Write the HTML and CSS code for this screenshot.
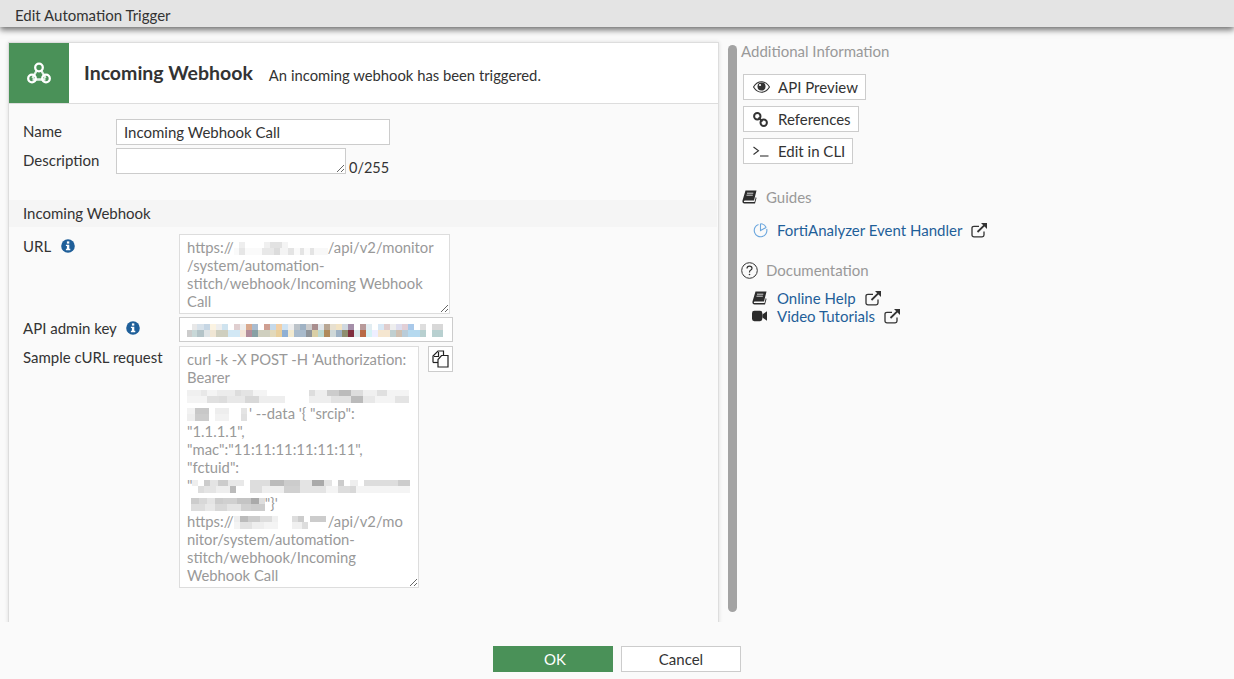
FILE: index.html
```html
<!DOCTYPE html>
<html lang="en">
<head>
  <meta charset="UTF-8" />
  <title>Edit Automation Trigger</title>
  <link rel="stylesheet" href="styles.css">
</head>
<body>

  <div class="title-bar">Edit Automation Trigger</div>

  <div class="main">
    <!-- Left: trigger form -->
    <div class="panel">
      <div class="panel-head">
        <div class="head-icon">
          <svg width="24" height="22" viewBox="0 0 24 22" fill="none" stroke="#fff" stroke-width="2.300">
            <path d="M9.6 8.800 L5.500 16 M14.400 8.800 L18.500 16 M5.500 17.500 H18.500" stroke="#e4f2e8" />
            <circle cx="12" cy="5.500" r="3.800" />
            <circle cx="5" cy="16.500" r="3.800" />
            <circle cx="19" cy="16.500" r="3.800" />
          </svg>
        </div>
        <span class="head-title">Incoming Webhook</span>
        <span class="head-text">An incoming webhook has been triggered.</span>
      </div>

      <div class="top-fields">
        <div class="row-name">
          <label class="lbl-short">Name</label>
          <input class="field name-input" type="text" value="Incoming Webhook Call" />
        </div>
        <div class="row-desc">
          <label class="lbl-short">Description</label>
          <textarea class="field desc-input"></textarea>
          <span class="counter">0/255</span>
        </div>
      </div>

      <div class="section-title">Incoming Webhook</div>

      <div class="hook-fields">
        <div class="row-url">
          <label class="lbl-long">URL
            <svg class="info url-info" width="14" height="14" viewBox="0 0 14 14"><circle cx="7" cy="7" r="6.800" fill="#1f5f99" /><rect x="5.900" y="2.400" width="2.400" height="2.200" fill="#fff" /><path d="M4.900 5.700h3.400v4.100h1v1.400H4.900V9.800h1V7.100h-1z" fill="#fff" /></svg>
          </label>
          <div class="area url-area">https://<span class="blur blur-url"></span>/api/v2/monitor<br>/system/automation-<br>stitch/webhook/Incoming Webhook<br>Call</div>
        </div>
        <div class="row-key">
          <label class="lbl-long">API admin key
            <svg class="info key-info" width="14" height="14" viewBox="0 0 14 14"><circle cx="7" cy="7" r="6.800" fill="#1f5f99" /><rect x="5.900" y="2.400" width="2.400" height="2.200" fill="#fff" /><path d="M4.900 5.700h3.400v4.100h1v1.400H4.900V9.800h1V7.100h-1z" fill="#fff" /></svg>
          </label>
          <div class="key-box"><div class="key-blur"></div></div>
        </div>
        <div class="row-curl">
          <label class="lbl-long">Sample cURL request</label>
          <div class="area curl-area">curl -k -X POST -H 'Authorization:<br>Bearer<br><span class="blur blur-line"></span><br><span class="blur blur-mid"></span>' --data '{ "srcip":<br>"1.1.1.1",<br>"mac":"11:11:11:11:11:11",<br>"fctuid":<br>"<span class="blur blur-line2"></span><br>&nbsp;<span class="blur blur-mid2"></span>"}'<br>https://<span class="blur blur-host"></span>/api/v2/mo<br>nitor/system/automation-<br>stitch/webhook/Incoming<br>Webhook Call</div>
          <button class="copy-btn" type="button">
            <svg width="17" height="18" viewBox="0 0 17 18" fill="none" stroke="#222" stroke-width="1.200">
              <path d="M1 12.500 V6 L6 1 H11.500 V5.500" />
              <path d="M2 6.500 H6.500 V2" />
              <path d="M1 12.500 H6" />
              <path d="M6 17 V9.500 L9.500 5.500 H16 V17 Z" fill="#fff" />
            </svg>
          </button>
        </div>
      </div>
    </div>

    <div class="scroll-thumb"></div>

    <!-- Right: additional information -->
    <div class="side">
      <div class="side-title">Additional Information</div>
      <div class="side-buttons">
        <div class="side-btn btn-api">
          <svg width="17" height="12" viewBox="0 0 17 12"><path d="M0.500 6 C3 2 5.500 .8 8.500 .8 S14 2 16.500 6 C14 10 11.500 11.200 8.500 11.200 S3 10 .5 6 Z" fill="none" stroke="#333" stroke-width="1.100" /><circle cx="8.500" cy="5.600" r="4" fill="#333" /><circle cx="7" cy="4" r="1.100" fill="#fff" /></svg>
          <span>API Preview</span>
        </div>
        <div class="side-btn btn-ref">
          <svg width="15" height="15" viewBox="0 0 15 15" fill="none" stroke="#333" stroke-width="2"><circle cx="4.300" cy="4.300" r="3.200" /><circle cx="10.700" cy="10.700" r="3.200" /><path d="M5.500 5.500 L9.500 9.500" /></svg>
          <span>References</span>
        </div>
        <div class="side-btn btn-cli">
          <svg width="16" height="11" viewBox="0 0 16 11" fill="none" stroke="#333" stroke-width="1.100"><path d="M.5 1 L5.500 4.800 L.5 8.500" /><path d="M7 10 H15.500" /></svg>
          <span>Edit in CLI</span>
        </div>
      </div>

      <div class="side-head guides-head">
        <svg class="book" width="15" height="14" viewBox="0 0 15 14"><path d="M3.500 .5 H14.500 L12 10.500 H2.800 Q1.500 10.500 2 12 H12.500 L13.800 7 L14.500 8 L13 13.500 H2.500 Q0 13.500 .5 10.500 Z" fill="#2c2c2c" /><path d="M5 3.200 H11.300 M4.500 5.200 H10.800" stroke="#fff" stroke-width=".8" /></svg>
        <span>Guides</span>
      </div>
      <div class="guide-link">
        <svg width="15" height="15" viewBox="0 0 15 15" fill="none" stroke="#6aa6de" stroke-width="1.100"><path d="M5.500 1.500 A6.300 6.300 0 1 0 13.700 6" /><path d="M7.500 .8 V7.500 L13.200 4.500" /><path d="M7.500 .8 Q11.500 1 13.200 4.500" /></svg>
        <a>FortiAnalyzer Event Handler</a>
        <svg class="ext" width="17" height="16" viewBox="0 0 17 16" fill="none" stroke="#333" stroke-width="1.300"><path d="M13 9.500 V13 Q13 14.800 11.200 14.800 H3 Q1 14.800 1 13 V6 Q1 4.300 3 4.300 H8" /><path d="M6.500 10 L14.500 2.200" stroke-width="1.800" /><path d="M10 1 H16 V7 Z" fill="#333" stroke="none" /></svg>
      </div>

      <div class="side-head doc-head">
        <svg width="17" height="17" viewBox="0 0 17 17" fill="none" stroke="#333" stroke-width="1"><circle cx="8.500" cy="8.500" r="7.800" /><path d="M6 6.500 Q6 4.200 8.500 4.200 Q11 4.200 11 6.300 Q11 7.700 9.500 8.300 Q8.500 8.800 8.500 10.500" stroke-width="1.200" /><circle cx="8.500" cy="12.500" r=".8" fill="#333" stroke="none" /></svg>
        <span>Documentation</span>
      </div>
      <div class="doc-links">
        <div class="doc-link">
          <svg class="book" width="15" height="14" viewBox="0 0 15 14"><path d="M3.500 .5 H14.500 L12 10.500 H2.800 Q1.500 10.500 2 12 H12.500 L13.800 7 L14.500 8 L13 13.500 H2.500 Q0 13.500 .5 10.500 Z" fill="#2c2c2c" /><path d="M5 3.200 H11.300 M4.500 5.200 H10.800" stroke="#fff" stroke-width=".8" /></svg>
          <a>Online Help</a>
          <svg class="ext" width="17" height="16" viewBox="0 0 17 16" fill="none" stroke="#333" stroke-width="1.300"><path d="M13 9.500 V13 Q13 14.800 11.200 14.800 H3 Q1 14.800 1 13 V6 Q1 4.300 3 4.300 H8" /><path d="M6.500 10 L14.500 2.200" stroke-width="1.800" /><path d="M10 1 H16 V7 Z" fill="#333" stroke="none" /></svg>
        </div>
        <div class="doc-link">
          <svg class="cam" width="15" height="12" viewBox="0 0 16 12"><rect x="0" y="0.500" width="11" height="11" rx="2.500" fill="#2c2c2c" /><path d="M11 4.500 L16 1 V11 L11 7.500 Z" fill="#2c2c2c" /></svg>
          <a>Video Tutorials</a>
          <svg class="ext" width="17" height="16" viewBox="0 0 17 16" fill="none" stroke="#333" stroke-width="1.300"><path d="M13 9.500 V13 Q13 14.800 11.200 14.800 H3 Q1 14.800 1 13 V6 Q1 4.300 3 4.300 H8" /><path d="M6.500 10 L14.500 2.200" stroke-width="1.800" /><path d="M10 1 H16 V7 Z" fill="#333" stroke="none" /></svg>
        </div>
      </div>
    </div>
  </div>

  <div class="footer">
    <button class="btn-ok" type="button">OK</button>
    <button class="btn-cancel" type="button">Cancel</button>
  </div>

</body>
</html>
```

FILE: styles.css
```css
* {
  box-sizing: border-box;
  font-family: Lato, 'Open Sans', sans-serif;
}

body {
  margin: 0;
  height: 679px;
  overflow: hidden;
  background-color: #fafafa;
  color: #333;
  font-size: 15px;
  display: flex;
  flex-direction: column;
}

.title-bar {
  position: relative;
  z-index: 1;
  height: 27px;
  flex: none;
  padding: 5px 0 0 15px;
  font-size: 15px;
  line-height: 20px;
  background-color: #e4e4e4;
  box-shadow: 0 3px 6px rgba(0, 0, 0, 0.55);
}

.main {
  display: flex;
  flex: none;
  height: 595px;
  padding: 15px 0 0 8px;
  overflow: hidden;
}

/* left panel */
.panel {
  width: 711px;
  height: 590px;
  flex: none;
  border-left: 1px solid #ddd;
  border-right: 1px solid #ddd;
  border-top: 1px solid #ddd;
  box-shadow: 0 0 4px rgba(0, 0, 0, 0.12);
  overflow: hidden;
}

.panel-head {
  display: flex;
  align-items: center;
  height: 61px;
  background-color: #fff;
  border-bottom: 1px solid #ddd;
}

.head-icon {
  width: 60px;
  height: 60px;
  flex: none;
  display: flex;
  align-items: center;
  justify-content: center;
  background-color: #4a9158;
}

.head-title {
  margin: -1px 0 0 15px;
  font-size: 19.500px;
  font-weight: 700;
}

.head-text {
  margin: 3px 0 0 16px;
  font-size: 14.800px;
}

.top-fields {
  padding: 15px 0 0 14px;
  height: 96px;
}

.row-name,
.row-desc {
  display: flex;
}

.row-desc {
  margin-top: 3px;
}

.lbl-short {
  width: 93px;
  flex: none;
  line-height: 24px;
}

.field {
  display: block;
  padding: 0 7px;
  margin: 0;
  font-size: 15px;
  color: #333;
  background-color: #fff;
  border: 1px solid #ccc;
  border-radius: 0;
  outline: none;
}

.name-input {
  width: 274px;
  height: 26px;
}

.desc-input {
  width: 230px;
  height: 26px;
}

.counter {
  align-self: flex-end;
  margin-left: 3px;
  margin-bottom: -4px;
  font-size: 14.500px;
  line-height: 20px;
}

.section-title {
  height: 27px;
  margin-right: 1px;
  padding-left: 14px;
  line-height: 27px;
  background-color: #f5f5f5;
}

.hook-fields {
  padding: 7px 0 0 14px;
}

.row-url,
.row-key,
.row-curl {
  display: flex;
  align-items: flex-start;
}

.row-key {
  margin-top: 3px;
}

.row-curl {
  margin-top: 4px;
}

.lbl-long {
  width: 156px;
  flex: none;
  line-height: 24px;
  white-space: nowrap;
}

.row-key .lbl-long,
.row-curl .lbl-long {
  line-height: 22px;
}

.info {
  vertical-align: -1px;
}

.url-info,
.key-info {
  margin-left: 6px;
}

.area {
  padding: 3px 7px;
  font-size: 14.800px;
  line-height: 18px;
  color: #999;
  background-color: #fff;
  border: 1px solid #ddd;
  overflow: hidden;
  resize: both;
  white-space: nowrap;
}

.url-area {
  width: 271px;
  height: 80px;
}

.curl-area {
  width: 240px;
  height: 242px;
}

.key-box {
  width: 274px;
  height: 25px;
  padding: 6px 7px;
  background-color: #fff;
  border: 1px solid #ccc;
}

.key-blur {
  width: 256px;
  height: 13px;
  background-image:
    linear-gradient(90deg, transparent 0 5px, #e8e8e8 5px 10px, #d8e2ea 10px 17px, #c6d6e4 17px 23px, #fbf3e2 23px 29px, #eee 29px 35px, #cfe3ef 35px 41px, #fff 41px 47px, #e0cfd0 47px 53px, #eee 53px 59px, #d9a98e 59px 65px, #a9bcd0 65px 71px, #fff 71px 77px, #cf9f92 77px 83px, #c5d9ea 83px 89px, #f2cfa5 89px 95px, #cfe3f3 95px 101px, #eee 101px 107px, #bcc3c9 107px 113px, #9fb2c4 113px 119px, #ccc 119px 125px, #a98e8e 125px 131px, #e0e6ea 131px 137px, #b8a693 137px 143px, #e7e0d0 143px 149px, #f2e3c4 149px 155px, #cfd8e0 155px 161px, #a58fa9 161px 167px, #fff 167px 173px, #b89a9a 173px 179px, #e2edf2 179px 185px, #fff 185px 191px, #d8e8f5 191px 197px, #e0cdcd 197px 203px, #eee 203px 209px, #dde 209px 215px, #e2cfd6 215px 221px, #a9c9ea 221px 227px, #fff 227px 233px, #dedede 233px 239px, #fff 239px 245px, #d8d8d8 245px 251px),
    linear-gradient(90deg, #ccc 0 5px, #c8d8d8 5px 10px, #b4c4c8 10px 17px, #dfe4e6 17px 23px, #f0e6d4 23px 29px, #cfcfbf 29px 41px, #d2e8f5 41px 53px, #f5e6d8 53px 59px, #b28c9a 59px 65px, #87a0a4 65px 71px, #cfcfbf 71px 83px, #e2d9bb 83px 89px, #e8cf9c 89px 95px, #8fb0d4 95px 101px, #f2ead0 101px 107px, #a9bbcc 107px 119px, #8f9499 119px 125px, #d9cfa5 125px 131px, #bcd8d0 131px 137px, #b08a5a 137px 143px, #cfd8d8 143px 149px, #9fb2c4 149px 155px, #8f8f6f 155px 161px, #80303f 161px 167px, #d8e8ea 167px 173px, #b86a46 173px 179px, #d5f2f5 179px 185px, #eef 185px 191px, #f5e6d0 191px 203px, #c0cfd0 203px 209px, #cfbfb0 209px 215px, #b9ccd9 215px 221px, #b5d9ef 221px 233px, #b8d0d0 233px 239px, #fff 239px 245px, #b8d0d0 245px 251px);
  background-size: 100% 6px, 100% 7px;
  background-position: 0 0, 0 6px;
  background-repeat: no-repeat;
}

.copy-btn {
  width: 25px;
  height: 26px;
  margin: 0 0 0 9px;
  padding: 0;
  display: flex;
  align-items: center;
  justify-content: center;
  background-color: #fff;
  border: 1px solid #ccc;
}

/* blurred values */
.blur {
  display: inline-block;
  height: 13px;
  vertical-align: -2px;
  background-size: 100% 6px, 100% 7px;
  background-position: 0 0, 0 6px;
  background-repeat: no-repeat;
}

.blur-url {
  width: 94px;
  background-image:
    linear-gradient(90deg, #fff 0 5px, #eee 5px 11px, #fff 11px 30px, #f0f0f0 30px 36px, #e2e2e2 36px 48px, #f4f4f4 48px 54px, #fff 54px 92px),
    linear-gradient(90deg, #fafafa 0 5px, #e6e6e6 5px 11px, #fafafa 11px 28px, #e8e8e8 28px 40px, #dcdcdc 40px 46px, #f4f4f4 46px 54px, #e4e4e4 54px 60px, #fafafa 60px 66px, #e4e4e4 66px 70px, #fafafa 70px 76px, #e4e4e4 76px 80px, #f8f8f8 80px 94px);
}

.blur-line {
  width: 222px;
  background-image:
    linear-gradient(90deg, #f0f0f0 0 14px, #e8e8e8 14px 20px, #f4f4f4 20px 30px, #ececec 30px 48px, #ddd 48px 54px, #e4e4e4 54px 66px, #f4f4f4 66px 80px, #fff 80px 122px, #ddd 122px 128px, #eee 128px 140px, #ccc 140px 152px, #bbb 152px 164px, #ddd 164px 176px, #f0f0f0 176px 190px, #e0e0e0 190px 200px, #f4f4f4 200px 222px),
    linear-gradient(90deg, #f4f4f4 0 20px, #e0e0e0 20px 32px, #ddd 32px 40px, #e8e8e8 40px 58px, #d8d8d8 58px 72px, #eee 72px 98px, #fff 98px 122px, #eee 122px 144px, #e2e2e2 144px 164px, #bbb 164px 176px, #e8e8e8 176px 188px, #f4f4f4 188px 208px, #e4e4e4 208px 222px);
}

.blur-mid {
  width: 62px;
  background-image:
    linear-gradient(90deg, #f2f2f2 0 8px, #c8c8c8 8px 22px, #fff 22px 28px, #eee 28px 42px, #fff 42px 54px, #e4e4e4 54px 60px, #fff 60px 62px),
    linear-gradient(90deg, #eee 0 8px, #ccc 8px 22px, #fff 22px 28px, #f2f2f2 28px 42px, #fff 42px 54px, #e0e0e0 54px 60px, #fff 60px 62px);
}

.blur-line2 {
  width: 218px;
  background-image:
    linear-gradient(90deg, #eee 0 6px, #fff 6px 12px, #ccc 12px 18px, #e4e4e4 18px 26px, #ccc 26px 36px, #e8e8e8 36px 52px, #fff 52px 58px, #ddd 58px 78px, #bbb 78px 92px, #ccc 92px 108px, #e4e4e4 108px 120px, #aaa 120px 132px, #e4e4e4 132px 140px, #fff 140px 146px, #ccc 146px 152px, #fff 152px 158px, #eee 158px 166px, #fff 166px 172px, #ddd 172px 206px, #ccc 206px 218px),
    linear-gradient(90deg, #fff 0 6px, #ddd 6px 12px, #e4e4e4 12px 24px, #eee 24px 38px, #bbb 38px 44px, #fff 44px 58px, #ddd 58px 70px, #eee 70px 92px, #d0d0d0 92px 108px, #e4e4e4 108px 134px, #f4f4f4 134px 146px, #ddd 146px 158px, #d8d8d8 158px 164px, #f4f4f4 164px 218px);
}

.blur-mid2 {
  width: 74px;
  background-image:
    linear-gradient(90deg, #ccc 0 8px, #d8d8d8 8px 16px, #e4e4e4 16px 24px, #ccc 24px 32px, #d0d0d0 32px 46px, #c4c4c4 46px 60px, #aaa 60px 68px, #ddd 68px 74px),
    linear-gradient(90deg, #ddd 0 14px, #e8e8e8 14px 24px, #d8d8d8 24px 36px, #e4e4e4 36px 50px, #d0d0d0 50px 60px, #ccc 60px 74px);
}

.blur-host {
  width: 94px;
  background-image:
    linear-gradient(90deg, #eee 0 6px, #bbb 6px 14px, #ccc 14px 26px, #ddd 26px 38px, #f0f0f0 38px 44px, #fff 44px 58px, #ddd 58px 64px, #ccc 64px 70px, #fff 70px 76px, #ccc 76px 92px, #fff 92px 94px),
    linear-gradient(90deg, #f4f4f4 0 6px, #e2e2e2 6px 18px, #eee 18px 30px, #f4f4f4 30px 44px, #fff 44px 58px, #f0f0f0 58px 68px, #ddd 68px 74px, #fff 74px 94px);
}

.scroll-thumb {
  width: 9px;
  height: 567px;
  margin: 3px 0 0 9px;
  flex: none;
  border-radius: 5px;
  background-color: #a3a3a3;
}

/* right column */
.side {
  padding-left: 4px;
  flex: 1;
}

.side-title {
  margin-top: -1px;
  color: #999;
  line-height: 20px;
}

.side-buttons {
  display: flex;
  flex-direction: column;
  align-items: flex-start;
  gap: 6px;
  margin: 13px 0 0 2px;
}

.side-btn {
  display: flex;
  align-items: center;
  height: 26px;
  padding-left: 9px;
  padding-right: 7px;
  background-color: #fff;
  border: 1px solid #ccc;
  white-space: nowrap;
}

.side-btn span {
  margin-left: 8px;
}

.btn-ref svg {
  margin-right: 2px;
}

.btn-cli svg {
  margin-right: 1px;
}

.side-head {
  display: flex;
  align-items: center;
  color: #999;
  line-height: 20px;
}

.guides-head {
  margin: 23px 0 0 1px;
}

.guides-head span {
  margin-left: 9px;
}

.doc-head {
  margin-top: 20px;
}

.doc-head span {
  margin-left: 8px;
}

a {
  color: #1f5f99;
}

.guide-link {
  display: flex;
  align-items: center;
  margin: 13px 0 0 12px;
  line-height: 20px;
}

.guide-link a {
  margin-left: 9px;
}

.ext {
  margin-left: 9px;
  flex: none;
}

.doc-links {
  margin: 9px 0 0 11px;
}

.doc-link {
  display: flex;
  align-items: center;
  height: 18px;
}

.doc-link a {
  margin-left: 10px;
}

.footer {
  display: flex;
  justify-content: flex-start;
  gap: 8px;
  padding: 24px 0 0 493px;
}

.footer button {
  width: 120px;
  height: 26px;
  padding: 0;
  font-size: 15px;
}

.footer .btn-ok {
  padding-left: 4px;
  color: #fff;
  background-color: #4a9158;
  border: none;
}

.btn-cancel {
  color: #333;
  background-color: #fff;
  border: 1px solid #ccc;
}
```
